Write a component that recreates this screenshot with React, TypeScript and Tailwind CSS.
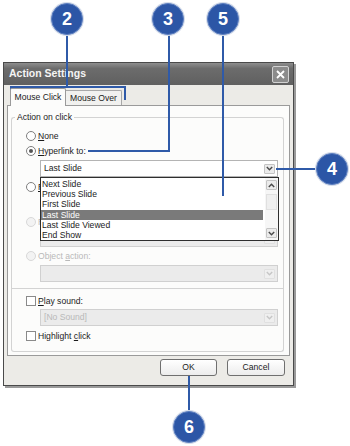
import React from 'react';

const Chevron = ({ up = false, light = false }: { up?: boolean; light?: boolean }) => (
  <svg width="7" height="5" viewBox="0 0 7 5" className={up ? 'rotate-180' : ''}>
    <path d="M0.8 1 L3.5 3.8 L6.2 1" fill="none" stroke={light ? '#c6c6c6' : '#4a4a4a'} strokeWidth="1.4" />
  </svg>
);

const ArrowBox = ({ up = false, light = false }: { up?: boolean; light?: boolean }) => (
  <div
    className={`w-[11px] h-[10px] flex items-center justify-center rounded-[1px] border ${
      light ? 'border-[#e0e0e0] bg-[#efefef]' : 'border-[#c4c4c4] bg-[#ebebeb]'
    }`}
  >
    <Chevron up={up} light={light} />
  </div>
);

const Combo = ({ text, disabled = false, mt }: { text?: string; disabled?: boolean; mt: string }) => (
  <div
    className={`${mt} ml-[14px] mr-[5px] h-[17px] flex items-center justify-between pl-[3px] pr-[2px] border ${
      disabled ? 'border-[#d0d0d0] bg-[#ebebeb] text-[#b9b9b9]' : 'border-[#b4b4b4] bg-white text-[#1a1a1a]'
    }`}
  >
    <span>{text}</span>
    <ArrowBox light={disabled} />
  </div>
);

const Radio = ({ checked = false, disabled = false }) => (
  <span
    className={`w-[10px] h-[10px] shrink-0 rounded-full border flex items-center justify-center ${
      disabled ? 'border-[#d8d8d8] bg-[#f3f3f3]' : 'border-[#7f7f7f] bg-white'
    }`}
  >
    {checked && <span className="w-[4px] h-[4px] rounded-full bg-[#555]" />}
  </span>
);

const Check = () => <span className="w-[10px] h-[10px] shrink-0 border border-[#8a8a8a] bg-white" />;

const Row = ({ mt, children }: { mt: string; children: React.ReactNode }) => (
  <div className={`${mt} h-[10px] flex items-center gap-[2px]`}>{children}</div>
);

const items = ['Next Slide', 'Previous Slide', 'First Slide', 'Last Slide', 'Last Slide Viewed', 'End Show'];

const Callout = ({ n, pos }: { n: string; pos: string }) => (
  <div
    className={`absolute ${pos} w-[32px] h-[32px] rounded-full bg-[#2c56a6] border-[1.5px] border-[#5d7fc0] shadow-[0_0_0_1px_#d3dbea] flex items-center justify-center text-white font-bold text-[18px] font-['Liberation_Sans_Narrow','Liberation_Sans',sans-serif]`}
  >
    {n}
  </div>
);

export default function App() {
  return (
    <div className="relative w-[350px] h-[446px] bg-white overflow-hidden font-['Liberation_Sans',Arial,sans-serif] text-[8.6px] text-[#1b1b1b]">
      {/* Dialog */}
      <div className="ml-[3px] mt-[62px] w-[291px] h-[324px] flex flex-col border border-[#4a4a4a] shadow-[2px_2px_0_#9a9a9a] bg-[#ecebe7]">
        {/* Title bar */}
        <div className="h-[22px] shrink-0 flex items-center justify-between pl-[5px] pr-[4px] bg-[linear-gradient(#8e8e8e,#6c6c6c_25%,#606060)]">
          <span className="text-[10.5px] font-bold text-[#f4f4f4]">Action Settings</span>
          <div className="w-[17px] h-[17px] rounded-[2px] border border-[#d2d2d2] bg-[#8c8c8c] flex items-center justify-center">
            <svg width="9" height="9" viewBox="0 0 9 9">
              <path d="M1 1 L8 8 M8 1 L1 8" stroke="#fff" strokeWidth="1.8" />
            </svg>
          </div>
        </div>

        {/* Body */}
        <div className="flex-1 flex flex-col px-[3px] pt-[3px]">
          {/* Tabs */}
          <div className="relative z-10 h-[17px] flex items-end pl-[3px]">
            <div className="h-[18px] -mb-px w-[56px] flex items-center justify-center border border-b-0 border-[#9a9a9a] rounded-t-[2px] bg-[#fcfcfb]">
              Mouse Click
            </div>
            <div className="h-[15px] w-[56px] flex items-center justify-center border border-b-0 border-l-0 border-[#a8a8a8] rounded-tr-[2px] bg-[#f1f1ef]">
              Mouse Over
            </div>
          </div>

          {/* Panel */}
          <div className="border border-[#9a9a9a] bg-[#fcfcfb] pl-[3px] pr-[5px] pt-[5px] pb-[3px]">
            {/* Group header */}
            <div className="h-[12px] flex items-end">
              <div className="w-[4px] h-[6px] border-l border-t border-[#d3d3d3] rounded-tl-[3px]" />
              <span className="px-[2px] leading-[12px] self-center">Action on click</span>
              <div className="flex-1 h-[6px] border-t border-r border-[#d3d3d3] rounded-tr-[3px]" />
            </div>
            {/* Group body */}
            <div className="flex flex-col pl-[14px] pb-[10px] border-l border-r border-b border-[#d3d3d3] rounded-b-[3px]">
              <Row mt="mt-[8px]">
                <Radio />
                <span>
                  <u>N</u>one
                </span>
              </Row>
              <Row mt="mt-[5px]">
                <Radio checked />
                <span>
                  <u>H</u>yperlink to:
                </span>
              </Row>
              <Combo mt="mt-[4px]" text="Last Slide" />
              <Row mt="mt-[5px]">
                <Radio />
                <span>
                  <u>R</u>un program:
                </span>
              </Row>
              <div className="mt-[3px] ml-[14px] mr-[5px] h-[17px] border border-[#b4b4b4] bg-white" />
              <Row mt="mt-[5px]">
                <Radio disabled />
                <span className="text-[#b9b9b9]">
                  Run <u>m</u>acro:
                </span>
              </Row>
              <Combo mt="mt-[3px]" disabled />
              <Row mt="mt-[4px]">
                <Radio disabled />
                <span className="text-[#b9b9b9]">
                  Object <u>a</u>ction:
                </span>
              </Row>
              <Combo mt="mt-[4px]" disabled />
              <div className="mt-[6px] -ml-[14px] h-px bg-[#d3d3d3]" />
              <Row mt="mt-[7px]">
                <Check />
                <span>
                  <u>P</u>lay sound:
                </span>
              </Row>
              <Combo mt="mt-[3px]" text="[No Sound]" disabled />
              <Row mt="mt-[5px]">
                <Check />
                <span>
                  Highlight <u>c</u>lick
                </span>
              </Row>
            </div>
          </div>

          {/* Buttons */}
          <div className="mt-[3px] flex justify-end gap-[10px] pr-[5px]">
            <button className="w-[57px] h-[17px] border border-[#6f6f6f] rounded-[3px] bg-[linear-gradient(#ffffff,#ececec)] text-[8.6px]">
              OK
            </button>
            <button className="w-[58px] h-[17px] border border-[#6f6f6f] rounded-[3px] bg-[linear-gradient(#ffffff,#ececec)] text-[8.6px]">
              Cancel
            </button>
          </div>
        </div>
      </div>

      {/* Open dropdown list */}
      <div className="absolute left-[40px] top-[177px] w-[239px] h-[64px] flex border border-[#2e2e2e] bg-white">
        <div className="flex-1 pt-[0.5px] pr-[2px]">
          {items.map((t) => (
            <div
              key={t}
              className={`h-[10.4px] leading-[10.4px] pl-px ${t === 'Last Slide' ? 'bg-[#7a7a7a] text-white' : ''}`}
            >
              {t}
            </div>
          ))}
        </div>
        <div className="w-[13px] flex flex-col items-center justify-between py-[2px] bg-[#f6f6f6]">
          <ArrowBox up />
          <div className="w-[11px] h-[16px] -mt-[14px] border border-[#e0e0e0] bg-[#efefef]" />
          <ArrowBox />
        </div>
      </div>

      {/* Callout lines */}
      <svg className="absolute inset-0 pointer-events-none" width="350" height="446">
        <g stroke="#2f5aa8" strokeWidth="2" fill="none">
          <path d="M67 34 V87" />
          <path d="M11 100 V87 H125 V100" />
          <path d="M169 34 V151 H88" />
          <path d="M223 34 V196" />
          <path d="M276 169 H317" />
          <path d="M189 376 V412" />
        </g>
      </svg>

      <Callout n="2" pos="left-[51px] top-[3px]" />
      <Callout n="3" pos="left-[152px] top-[3px]" />
      <Callout n="5" pos="left-[207px] top-[3px]" />
      <Callout n="4" pos="left-[316px] top-[153px]" />
      <Callout n="6" pos="left-[173px] top-[411px]" />
    </div>
  );
}
